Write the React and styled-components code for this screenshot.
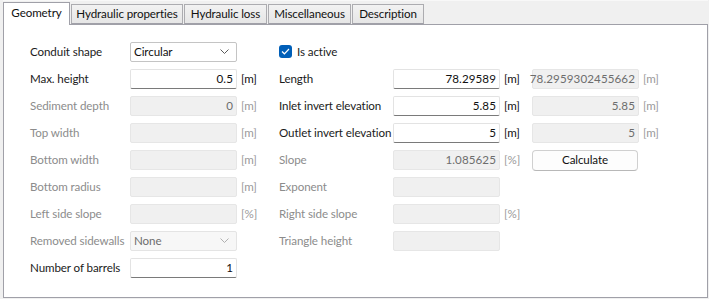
import React from "react"
import styled, { createGlobalStyle } from "styled-components"

const GlobalStyle = createGlobalStyle`
  html, body {
    margin: 0;
    padding: 0;
    background: #f0f0f0;
  }
  body {
    font-family: "Segoe UI", Lato, "Noto Sans", sans-serif;
    font-size: 11.6px;
    letter-spacing: -0.1px;
    color: #1b1b1b;
    -webkit-font-smoothing: antialiased;
  }
`

const Window = styled.div`
  width: 709px;
  height: 299px;
  padding: 0 1px 0 3px;
  box-sizing: border-box;
  display: flex;
  flex-direction: column;
`

const TabStrip = styled.div`
  height: 25px;
  display: flex;
  align-items: flex-end;
  border-bottom: 1px solid #a0a0a8;
  box-sizing: border-box;
  border-top: 1px solid #f8f8f8;
`

const Tab = styled.div`
  width: ${(p) => p.$width}px;
  height: ${(p) => (p.$active ? 23 : 20)}px;
  margin-bottom: ${(p) => (p.$active ? -1 : 0)}px;
  margin-right: 1px;
  box-sizing: border-box;
  display: flex;
  align-items: center;
  justify-content: center;
  white-space: nowrap;
  border: 1px solid ${(p) => (p.$active ? "#a0a0a8" : "#acacb0")};
  border-bottom: ${(p) => (p.$active ? "none" : "1px solid #a0a0a8")};
  background: ${(p) =>
    p.$active ? "#ffffff" : "linear-gradient(#f2f2f2, #e6e6e6)"};
  color: #111;
  padding-bottom: ${(p) => (p.$active ? 3 : 1)}px;
`

const Panel = styled.div`
  flex: 1;
  background: #ffffff;
  border: 1px solid #a0a0a8;
  border-top: none;
  margin-bottom: 1px;
  padding: 17px 0 0 26px;
`

const Form = styled.div`
  display: grid;
  grid-template-columns: 100px 107px 42px 114px 107px 32px 107px 1fr;
  grid-auto-rows: 20px;
  row-gap: 7px;
  align-items: center;
`

const Label = styled.div`
  color: ${(p) => (p.$disabled ? "#8c8c8c" : "#1b1b1b")};
  white-space: nowrap;
  padding-bottom: 2px;
`

const Field = styled.div`
  height: 20px;
  box-sizing: border-box;
  display: flex;
  align-items: center;
  justify-content: flex-end;
  padding: 0 3px 1px 0;
  border: 1px solid ${(p) => (p.$disabled ? "#e6e6e6" : "#e3e3e3")};
  border-bottom-color: ${(p) => (p.$disabled ? "#e6e6e6" : "#7a7a7a")};
  border-radius: 2px;
  background: ${(p) => (p.$disabled ? "#f0f0f0" : "#ffffff")};
  color: ${(p) => (p.$disabled ? "#6d6d6d" : "#111")};
  white-space: nowrap;
  letter-spacing: 0.1px;
`

const Unit = styled.div`
  padding: 0 0 2px 4px;
  color: ${(p) => (p.$disabled ? "#9a9a9a" : "#111")};
`

const Select = styled.div`
  height: 20px;
  box-sizing: border-box;
  display: flex;
  align-items: center;
  justify-content: space-between;
  padding: 0 7px 1px 3px;
  border: 1px solid ${(p) => (p.$disabled ? "#e4e4e4" : "#c4c4c4")};
  border-radius: 2px;
  background: ${(p) => (p.$disabled ? "#f7f7f7" : "#ffffff")};
  color: ${(p) => (p.$disabled ? "#6d6d6d" : "#111")};
`

const Check = styled.label`
  grid-column: span 2;
  display: flex;
  align-items: center;
  gap: 5px;
  padding-bottom: 1px;
`

const Box = styled.span`
  width: 13px;
  height: 13px;
  border-radius: 3px;
  background: #005fb8;
  display: flex;
  align-items: center;
  justify-content: center;
`

const Button = styled.div`
  height: 21px;
  box-sizing: border-box;
  display: flex;
  align-items: center;
  justify-content: center;
  padding-bottom: 1px;
  border: 1px solid #d0d0d0;
  border-bottom-color: #b8b8b8;
  border-radius: 4px;
  background: #fdfdfd;
  color: #111;
  margin-right: 1px;
`

const Empty = styled.div``

const Chevron = ({ color }) => (
  <svg width="9" height="5" viewBox="0 0 9 5">
    <path d="M0.5 0.5 L4.5 4.5 L8.5 0.5" fill="none" stroke={color} strokeWidth="1" />
  </svg>
)

const tabs = [
  { title: "Geometry", width: 67, active: true },
  { title: "Hydraulic properties", width: 112 },
  { title: "Hydraulic loss", width: 83 },
  { title: "Miscellaneous", width: 83 },
  { title: "Description", width: 72 },
]

const App = () => {
  return (
    <>
      <GlobalStyle />
      <Window>
        <TabStrip>
          {tabs.map((t) => (
            <Tab key={t.title} $width={t.width} $active={t.active}>
              {t.title}
            </Tab>
          ))}
        </TabStrip>
        <Panel>
          <Form>
            {/* row 1 */}
            <Label>Conduit shape</Label>
            <Select>
              Circular
              <Chevron color="#5a5a5a" />
            </Select>
            <Empty />
            <Check>
              <Box>
                <svg width="9" height="7" viewBox="0 0 9 7">
                  <path d="M1 3.5 L3.4 5.8 L8 1" fill="none" stroke="#fff" strokeWidth="1.2" />
                </svg>
              </Box>
              Is active
            </Check>
            <Empty />
            <Empty />
            <Empty />

            {/* row 2 */}
            <Label>Max. height</Label>
            <Field>0.5</Field>
            <Unit>[m]</Unit>
            <Label>Length</Label>
            <Field>78.29589</Field>
            <Unit>[m]</Unit>
            <Field $disabled>78.2959302455662</Field>
            <Unit $disabled>[m]</Unit>

            {/* row 3 */}
            <Label $disabled>Sediment depth</Label>
            <Field $disabled>0</Field>
            <Unit $disabled>[m]</Unit>
            <Label>Inlet invert elevation</Label>
            <Field>5.85</Field>
            <Unit>[m]</Unit>
            <Field $disabled>5.85</Field>
            <Unit $disabled>[m]</Unit>

            {/* row 4 */}
            <Label $disabled>Top width</Label>
            <Field $disabled />
            <Unit $disabled>[m]</Unit>
            <Label>Outlet invert elevation</Label>
            <Field>5</Field>
            <Unit>[m]</Unit>
            <Field $disabled>5</Field>
            <Unit $disabled>[m]</Unit>

            {/* row 5 */}
            <Label $disabled>Bottom width</Label>
            <Field $disabled />
            <Unit $disabled>[m]</Unit>
            <Label $disabled>Slope</Label>
            <Field $disabled>1.085625</Field>
            <Unit $disabled>[%]</Unit>
            <Button>Calculate</Button>
            <Empty />

            {/* row 6 */}
            <Label $disabled>Bottom radius</Label>
            <Field $disabled />
            <Unit $disabled>[m]</Unit>
            <Label $disabled>Exponent</Label>
            <Field $disabled />
            <Empty />
            <Empty />
            <Empty />

            {/* row 7 */}
            <Label $disabled>Left side slope</Label>
            <Field $disabled />
            <Unit $disabled>[%]</Unit>
            <Label $disabled>Right side slope</Label>
            <Field $disabled />
            <Unit $disabled>[%]</Unit>
            <Empty />
            <Empty />

            {/* row 8 */}
            <Label $disabled>Removed sidewalls</Label>
            <Select $disabled>
              None
              <Chevron color="#b0b0b0" />
            </Select>
            <Empty />
            <Label $disabled>Triangle height</Label>
            <Field $disabled />
            <Empty />
            <Empty />
            <Empty />

            {/* row 9 */}
            <Label>Number of barrels</Label>
            <Field>1</Field>
          </Form>
        </Panel>
      </Window>
    </>
  )
}

export default App
